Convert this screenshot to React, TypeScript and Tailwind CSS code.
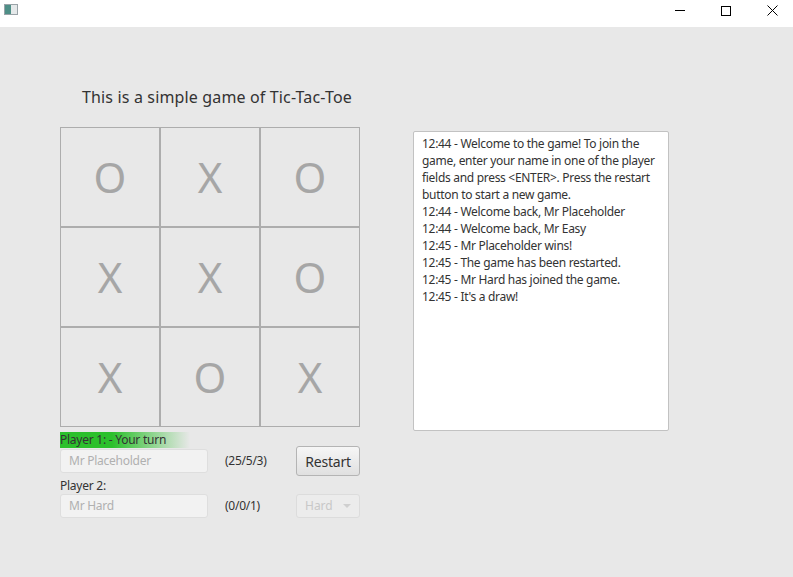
import React from "react";

const board = ["O", "X", "O", "X", "X", "O", "X", "O", "X"];

const log = [
  "12:44 - Welcome to the game! To join the game, enter your name in one of the player fields and press <ENTER>. Press the restart button to start a new game.",
  "12:44 - Welcome back, Mr Placeholder",
  "12:44 - Welcome back, Mr Easy",
  "12:45 - Mr Placeholder wins!",
  "12:45 - The game has been restarted.",
  "12:45 - Mr Hard has joined the game.",
  "12:45 - It's a draw!",
];

function TitleBar() {
  return (
    <div className="h-[27px] bg-white flex items-center justify-between">
      <div className="ml-[4px] mt-[-8px] w-[14px] h-[11px] border border-[#9aa3a8] flex">
        <div className="w-[6px] h-full bg-[#4e8f87]" />
        <div className="flex-1 bg-[#e5e9ea]" />
      </div>
      <div className="flex items-center h-full mt-[-6px] mr-[-2px]">
        <div className="w-[46px] flex justify-center">
          <div className="w-[10px] h-px bg-black" />
        </div>
        <div className="w-[46px] flex justify-center">
          <div className="w-[10px] h-[10px] border border-black" />
        </div>
        <div className="w-[46px] flex justify-center">
          <svg width="11" height="11" viewBox="0 0 11 11">
            <path d="M0.5 0.5L10.5 10.5M10.5 0.5L0.5 10.5" stroke="black" strokeWidth="1" />
          </svg>
        </div>
      </div>
    </div>
  );
}

export default function App() {
  return (
    <div className="w-[793px] h-[577px] bg-[#e8e8e8] overflow-hidden" style={{ fontFamily: '"Noto Sans", "Open Sans", sans-serif' }}>
      <TitleBar />
      <div className="flex pt-[60px] pl-[60px]">
        <div className="w-[300px] flex flex-col">
          <div className="text-[16px] text-[#333] pl-[22px] h-[40px] leading-[20px] tracking-[0.15px] whitespace-nowrap">This is a simple game of Tic-Tac-Toe</div>
          <div className="grid grid-cols-3 w-[300px] h-[300px]">
            {board.map((c, i) => (
              <div
                key={i}
                className="border border-[#adadad] flex items-center justify-center text-[42px] text-[#a6a6a6] leading-none"
              >
                {c}
              </div>
            ))}
          </div>
          <div className="mt-[5px] text-[12px] leading-[16px] text-[#333] tracking-[-0.25px] w-[130px] bg-gradient-to-r from-[#2cc02c] from-40% to-transparent">
            Player 1: - Your turn
          </div>
          <div className="flex items-center h-[30px] mt-[-2px]">
            <div className="w-[148px] h-[24px] border border-[#dedede] bg-[#f2f2f2] rounded-[3px] text-[12px] tracking-[-0.25px] text-[#b0b0b0] pl-[8px] flex items-center">
              Mr Placeholder
            </div>
            <div className="ml-[17px] text-[12px] tracking-[-0.25px] text-[#333] w-[71px]">(25/5/3)</div>
            <div className="w-[64px] h-[30px] border border-[#b4b4b4] rounded-[3px] bg-gradient-to-b from-[#f6f6f6] to-[#e0e0e0] text-[14px] tracking-[-0.2px] text-[#333] flex items-center justify-center">
              Restart
            </div>
          </div>
          <div className="text-[12px] leading-[16px] tracking-[-0.25px] text-[#333] mt-[2px]">Player 2:</div>
          <div className="flex items-center h-[24px]">
            <div className="w-[148px] h-[24px] border border-[#dedede] bg-[#f2f2f2] rounded-[3px] text-[12px] tracking-[-0.25px] text-[#b0b0b0] pl-[8px] flex items-center">
              Mr Hard
            </div>
            <div className="ml-[17px] text-[12px] tracking-[-0.25px] text-[#333] w-[71px]">(0/0/1)</div>
            <div className="w-[64px] h-[24px] border border-[#dcdcdc] rounded-[3px] bg-[#ececec] text-[12px] text-[#c8c8c8] flex items-center justify-between pl-[8px] pr-[8px]">
              <span>Hard</span>
              <svg width="8" height="4" viewBox="0 0 8 4">
                <path d="M0 0H8L4 4Z" fill="#cfcfcf" />
              </svg>
            </div>
          </div>
        </div>
        <div className="ml-[53px] mt-[44px] w-[256px] h-[300px] bg-white border border-[#c2c2c2] rounded-[2px] px-[8px] py-[3px] text-[12px] leading-[17px] tracking-[-0.3px] text-[#333]">
          {log.map((l, i) => (
            <div key={i}>{l}</div>
          ))}
        </div>
      </div>
    </div>
  );
}
